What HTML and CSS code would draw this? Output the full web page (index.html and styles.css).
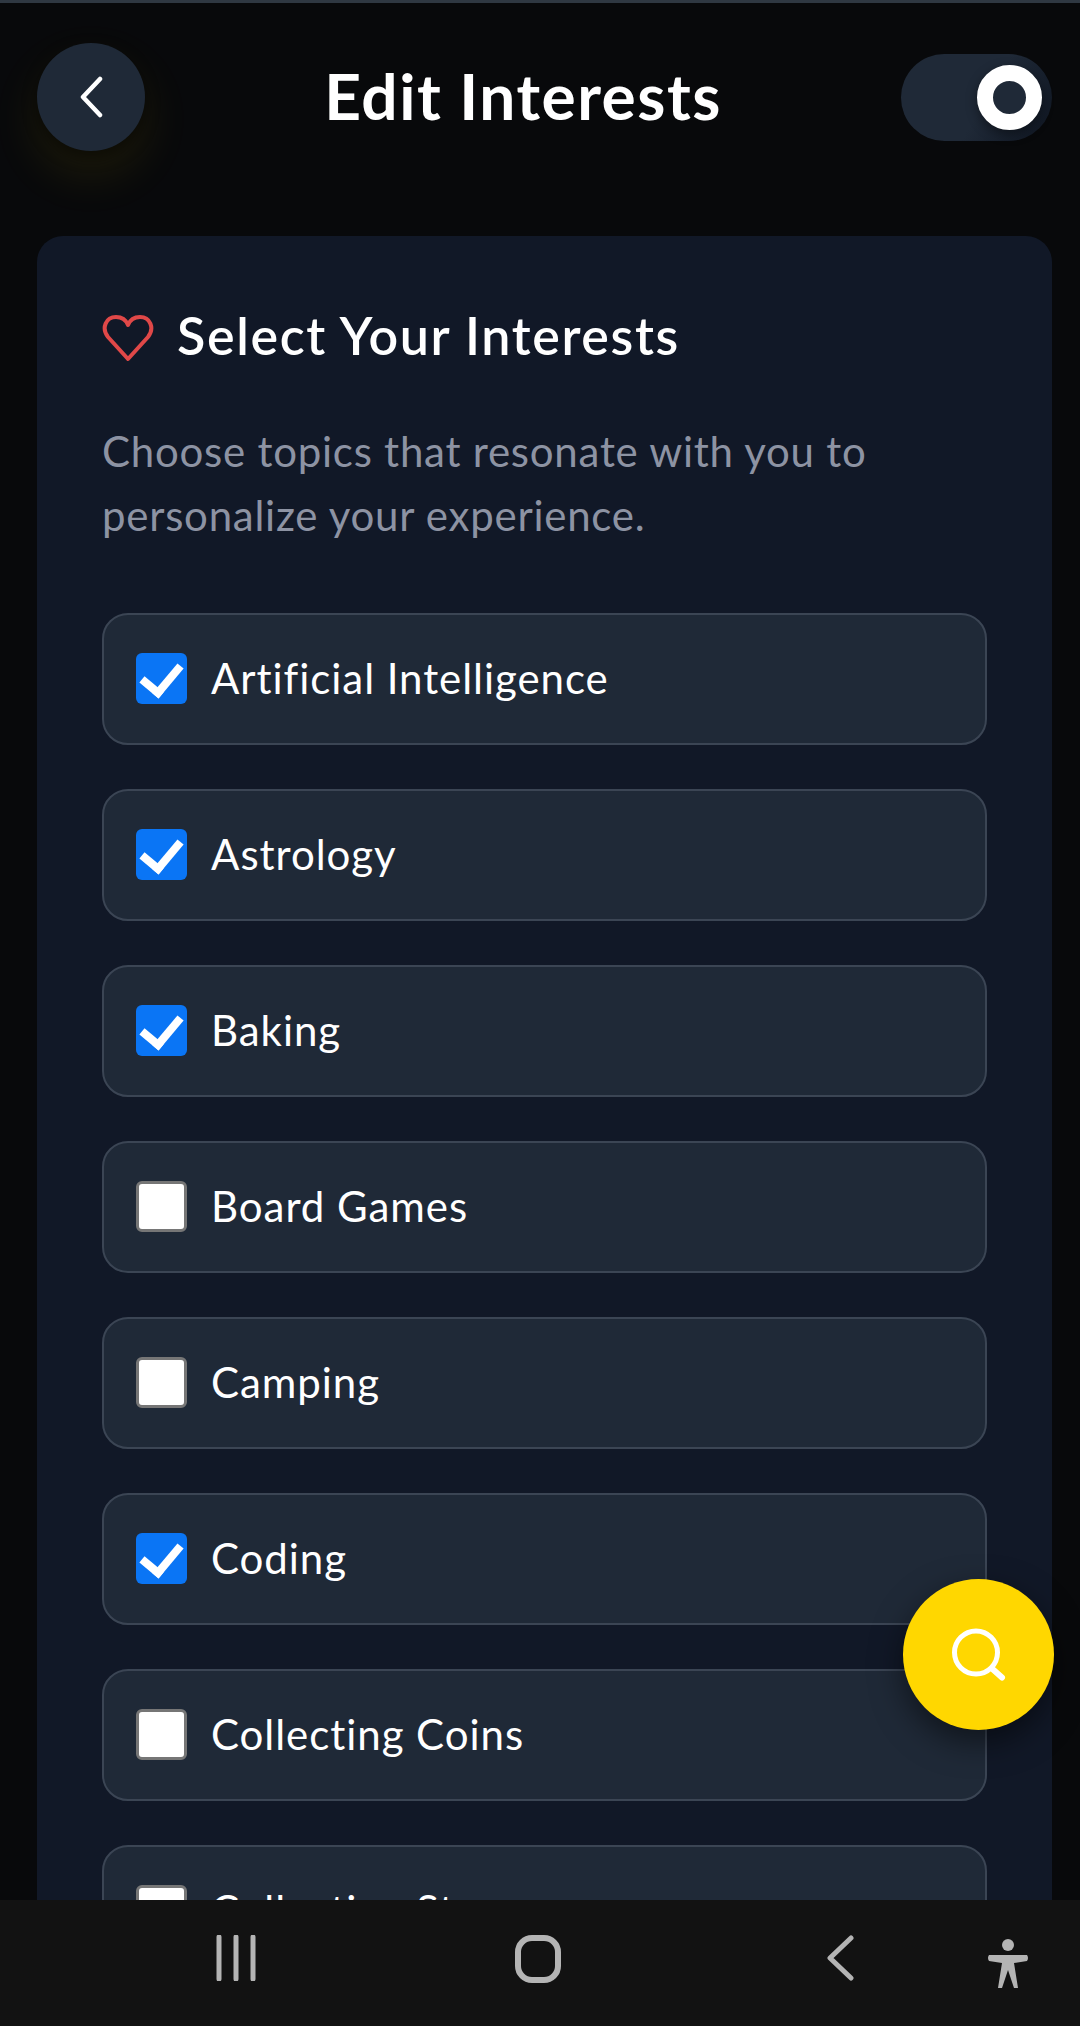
FILE: index.html
```html
<!DOCTYPE html>
<html lang="en">
<head>
  <meta charset="UTF-8">
  <title>Edit Interests</title>
  <link rel="stylesheet" href="styles.css">
</head>
<body>

  <div class="screen">
    <main class="content">
      <header class="topbar">
        <button class="back-btn" aria-label="Back">
          <svg width="30" height="42" viewBox="0 0 30 42"><path d="M24 3 L7 21 L24 39" fill="none" stroke="#fff" stroke-width="4.5" stroke-linecap="round" stroke-linejoin="round"/></svg>
        </button>
        <h1>Edit Interests</h1>
        <div class="toggle"><span class="knob"></span></div>
      </header>

      <section class="card">
        <h2>
          <svg class="heart" width="52" height="48" viewBox="0 0 52 48"><path d="M26 45 L6 23 C-1 14 4 3 14 3 C20 3 24 6 26 11 C28 6 32 3 38 3 C48 3 53 14 46 23 Z" fill="none" stroke="#e04848" stroke-width="4" stroke-linejoin="round"/></svg>
          Select Your Interests
        </h2>
        <p class="hint">Choose topics that resonate with you to personalize your experience.</p>

        <div class="interest-list">
          <label class="interest"><input type="checkbox" checked>Artificial Intelligence</label>
          <label class="interest"><input type="checkbox" checked>Astrology</label>
          <label class="interest"><input type="checkbox" checked>Baking</label>
          <label class="interest"><input type="checkbox">Board Games</label>
          <label class="interest"><input type="checkbox">Camping</label>
          <label class="interest"><input type="checkbox" checked>Coding</label>
          <label class="interest"><input type="checkbox">Collecting Coins</label>
          <label class="interest"><input type="checkbox">Collecting Stamps</label>
        </div>
      </section>

      <button class="fab" aria-label="Search">
        <svg width="76" height="76" viewBox="0 0 76 76"><circle cx="35" cy="35.5" r="21.5" fill="none" stroke="#fff" stroke-width="5"/><path d="M51.500 52 L61 60.500" stroke="#fff" stroke-width="6" stroke-linecap="round"/></svg>
      </button>
    </main>

    <nav class="navbar">
      <svg class="nav-recent" width="44" height="46" viewBox="0 0 44 46"><path d="M5 2 V44 M22 2 V44 M39 2 V44" stroke="#b4b4b4" stroke-width="5" stroke-linecap="round"/></svg>
      <svg class="nav-home" width="46" height="48" viewBox="0 0 46 48"><rect x="3" y="3" width="40" height="42" rx="14" fill="none" stroke="#b4b4b4" stroke-width="6"/></svg>
      <svg class="nav-back" width="28" height="46" viewBox="0 0 28 46"><path d="M25 3 L4 23 L25 43" fill="none" stroke="#b4b4b4" stroke-width="5" stroke-linecap="round" stroke-linejoin="round"/></svg>
      <svg class="nav-access" width="42" height="50" viewBox="0 0 42 50"><ellipse cx="21" cy="6" rx="6" ry="6" fill="#b4b4b4"/><path d="M2 16 H40 Q42 19 40 22 L27 24 L31 49 H27 L21 31 L15 49 H11 L15 24 L2 22 Q0 19 2 16 Z" fill="#b4b4b4"/></svg>
    </nav>
  </div>

</body>
</html>
```

FILE: styles.css
```css
* {
  box-sizing: border-box;
}

html, body {
  margin: 0;
  height: 100%;
}

body {
  font-family: "Lato", "Noto Sans", sans-serif;
  background-color: #08090b;
  color: white;
}

.screen {
  height: 2026px;
  display: flex;
  flex-direction: column;
  overflow: hidden;
  border-top: 3px solid #2f3842;
}

.content {
  position: relative;
  flex: 1;
  min-height: 0;
  overflow: hidden;
  padding: 0 28px 0 37px;
}

.topbar {
  display: flex;
  align-items: center;
  justify-content: space-between;
  height: 186px;
  padding-top: 2px;
  margin-bottom: 47px;
}

.back-btn {
  width: 108px;
  height: 108px;
  border: none;
  border-radius: 50%;
  background-color: #1f2937;
  box-shadow: 0 6px 14px rgba(0, 0, 0, 0.5), 0 22px 50px rgba(255, 215, 0, 0.1);
  display: flex;
  align-items: center;
  justify-content: center;
  padding: 0;
}

h1 {
  margin: 0 0 4px;
  font-size: 64px;
  font-weight: 700;
  letter-spacing: 1.5px;
}

.toggle {
  width: 151px;
  height: 87px;
  border-radius: 44px;
  background: linear-gradient(120deg, #1f2937 55%, #0f1622 100%);
  display: flex;
  align-items: center;
  justify-content: flex-end;
  padding-right: 10px;
}

.knob {
  width: 65px;
  height: 65px;
  border-radius: 50%;
  border: 16px solid white;
  background-color: #1f2937;
  box-shadow: 0 4px 12px rgba(0, 0, 0, 0.4);
}

.card {
  background-color: #111827;
  border-radius: 26px;
  padding: 66px 65px 40px;
  height: 1800px;
}

h2 {
  display: flex;
  align-items: center;
  gap: 23px;
  margin: 0 0 51px;
  font-size: 52px;
  line-height: 66px;
  font-weight: 600;
  letter-spacing: 1.65px;
}

.heart {
  margin-top: 6px;
}

.hint {
  margin: 0 0 66px;
  font-size: 42px;
  line-height: 64px;
  color: #8d93a3;
  letter-spacing: 0.75px;
}

.interest-list {
  display: flex;
  flex-direction: column;
  gap: 44px;
}

.interest {
  display: flex;
  align-items: center;
  gap: 24px;
  height: 132px;
  padding: 0 32px 2px;
  background-color: #1f2937;
  border: 2px solid #3b4554;
  border-radius: 26px;
  font-size: 42px;
  letter-spacing: 0.95px;
}

.interest input {
  appearance: none;
  display: grid;
  place-items: center;
  width: 51px;
  height: 51px;
  margin: 0;
  flex-shrink: 0;
  background-color: white;
  border: 3px solid #767676;
  border-radius: 6px;
}

.interest input:checked {
  background-color: #0a75f5;
  border: none;
}

.interest input:checked::after {
  content: "";
  width: 17px;
  height: 31px;
  margin-top: -6px;
  border: solid white;
  border-width: 0 8px 8px 0;
  transform: rotate(40deg);
}

.fab {
  position: absolute;
  left: 903px;
  top: 1576px;
  width: 151px;
  height: 151px;
  border: none;
  border-radius: 50%;
  padding: 0;
  background-color: #ffd700;
  box-shadow: 0 12px 32px rgba(0, 0, 0, 0.5);
  display: flex;
  align-items: center;
  justify-content: center;
}

.navbar {
  display: flex;
  align-items: center;
  height: 126px;
  flex-shrink: 0;
  background-color: #121212;
  padding-left: 214px;
  padding-bottom: 10px;
}

.nav-home {
  margin-left: 257px;
  margin-top: 2px;
}

.nav-back {
  margin-left: 265px;
}

.nav-access {
  margin-left: 133px;
  margin-top: 11px;
}
```
